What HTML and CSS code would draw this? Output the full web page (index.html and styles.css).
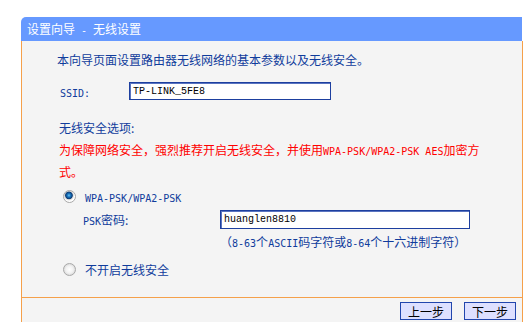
FILE: index.html
```html
<!DOCTYPE html>
<html>
<head>
  <meta charset="utf-8">
  <title>设置向导 - 无线设置</title>
  <link rel="stylesheet" href="styles.css">
</head>
<body>
  <div class="panel">
    <div class="title">设置向导<span class="en"> - </span>无线设置</div>

    <div class="content">
      <p class="intro">本向导页面设置路由器无线网络的基本参数以及无线安全。</p>

      <div class="field-row ssid-row">
        <label for="ssid" class="field-label"><span class="en">SSID:</span></label>
        <input type="text" id="ssid" class="field-input" value="TP-LINK_5FE8" />
      </div>

      <p class="section-label">无线安全选项:</p>
      <p class="warning">为保障网络安全，强烈推荐开启无线安全，并使用<span class="en">WPA-PSK/WPA2-PSK AES</span>加密方<br>式。</p>

      <div class="radio-row">
        <input type="radio" name="security" id="wpa" checked />
        <label for="wpa"><span class="en">WPA-PSK/WPA2-PSK</span></label>
      </div>

      <div class="field-row psk-row">
        <label for="psk" class="field-label"><span class="en">PSK</span>密码:</label>
        <input type="text" id="psk" class="field-input" value="huanglen8810" />
      </div>
      <p class="hint">（<span class="en">8-63</span>个<span class="en">ASCII</span>码字符或<span class="en">8-64</span>个十六进制字符）</p>

      <div class="radio-row radio-off">
        <input type="radio" name="security" id="none" />
        <label for="none">不开启无线安全</label>
      </div>
    </div>

    <div class="button-bar">
      <button>上一步</button>
      <button>下一步</button>
    </div>
  </div>
</body>
</html>
```

FILE: styles.css
```css
body {
  margin: 0;
  background-color: #ffffff;
  font-family: "Noto Sans CJK SC", sans-serif;
  font-size: 12px;
  color: #103c9c;
}

p {
  margin: 0;
}

.en {
  font-family: "DejaVu Sans Mono", monospace;
  font-size: 10px;
  white-space: pre;
}

.panel {
  margin: 17px 0 0 21px;
  width: 502px;
}

.title {
  height: 24px;
  line-height: 24px;
  margin-right: 1px;
  padding-left: 6px;
  background-color: #6699ff;
  color: #ffffff;
  border-top-left-radius: 5px;
}

.content {
  box-sizing: border-box;
  height: 257px;
  padding: 9px 39px 0 35px;
  background-color: #f4f4f4;
  border-left: 1px solid #f5a04a;
  border-right: 1px solid #f5a04a;
  border-bottom: 1px solid #f5a04a;
}

.intro {
  line-height: 20px;
}

.field-row {
  display: flex;
  align-items: center;
}

.field-input {
  box-sizing: border-box;
  margin: 0;
  padding: 0 3px;
  border: 1px solid #1d3f9f;
  box-shadow: inset 1px 1px 0 #5a74c0;
  background-color: #ffffff;
  font-family: "Liberation Mono", monospace;
  font-size: 10px;
  line-height: 16px;
  color: #000000;
  outline: none;
}

.ssid-row {
  margin-top: 10px;
  height: 22px;
}

.ssid-row .field-label {
  width: 69px;
  padding-left: 3px;
}

.ssid-row .field-input {
  width: 202px;
  height: 18px;
}

.section-label {
  margin-top: 16px;
  padding-left: 2px;
  line-height: 20px;
}

.warning {
  margin-top: 2px;
  padding-left: 2px;
  line-height: 20px;
  color: #ff0000;
}

.radio-row {
  display: flex;
  align-items: center;
  margin-top: 4px;
  height: 20px;
  padding-left: 6px;
}

.radio-row input {
  appearance: none;
  -webkit-appearance: none;
  box-sizing: border-box;
  width: 13px;
  height: 13px;
  margin: 0 9px 0 0;
  border: 1px solid #a8a8a8;
  border-radius: 50%;
  background: radial-gradient(circle at 50% 50%, #ffffff 0, #f2f2f2 45%, #c8c8c8 100%);
}

.radio-row input:checked {
  background: radial-gradient(circle at 45% 40%, #6ec3f0 0, #1a78c2 1.6px, #0b3b74 3.4px, #d6d6d6 4.2px, #ffffff 5.5px);
}

.radio-off {
  margin-top: 5px;
}

.psk-row {
  margin-top: 2px;
  height: 23px;
}

.psk-row .field-label {
  box-sizing: border-box;
  width: 163px;
  padding-left: 26px;
}

.psk-row .field-input {
  width: 250px;
  height: 19px;
}

.hint {
  margin-top: 1px;
  padding-left: 163px;
  line-height: 20px;
}

.button-bar {
  display: flex;
  justify-content: flex-end;
  gap: 12px;
  height: 24px;
  box-sizing: border-box;
  padding: 4px 6px 0 0;
  background-color: #f4f4f4;
  border-left: 1px solid #f5a04a;
  border-right: 1px solid #f5a04a;
}

.button-bar button {
  width: 52px;
  height: 18px;
  padding: 0;
  border: 1px solid #2146ad;
  background-color: #dde0ff;
  font-family: "Noto Sans CJK SC", sans-serif;
  font-size: 12px;
  color: #000000;
  cursor: pointer;
}
```
